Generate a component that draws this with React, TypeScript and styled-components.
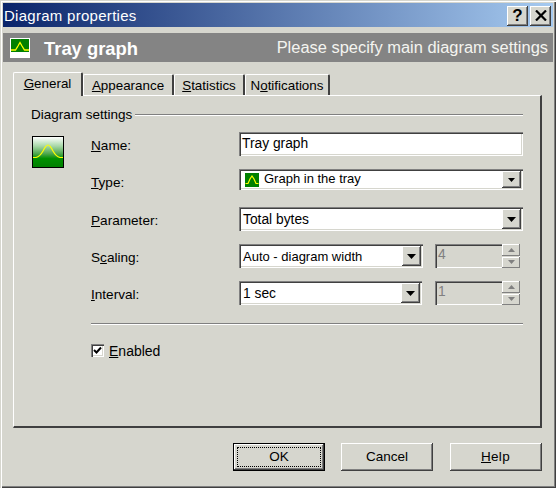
import React from "react";
import styled, { createGlobalStyle } from "styled-components";

const FACE = "#d6d6ce";
const raised = `inset -1px -1px #404040, inset 1px 1px #fff, inset -2px -2px #808080`;
const sunken = `inset 1px 1px #808080, inset 2px 2px #404040, inset -1px -1px #fff, inset -2px -2px ${FACE}`;

const Global = createGlobalStyle`
  html, body { margin: 0; padding: 0; background: ${FACE}; }
  * { box-sizing: border-box; }
`;

const Win = styled.div`
  width: 556px; height: 488px; background: ${FACE}; padding: 3px 3px 0;
  display: flex; flex-direction: column; overflow: hidden;
  font-family: "Liberation Sans", Arial, sans-serif; font-size: 13px; color: #000;
  box-shadow: inset 1px 1px ${FACE}, inset 2px 2px #fff, inset -1px -1px #404040, inset -2px -2px #808080;
`;
const TitleBar = styled.div`
  height: 24px; flex: none; display: flex; align-items: center; justify-content: space-between;
  padding: 0 2px 0 1px; background: linear-gradient(90deg, #0a246a, #a6caf0);
`;
const TitleText = styled.span`
  color: #fff; font-size: 15px; letter-spacing: 0.28px;
`;
const TitleButtons = styled.div`
  display: flex; gap: 2px; margin-top: 1px;
`;
const CapButton = styled.div`
  width: 21px; height: 20px; background: ${FACE}; box-shadow: ${raised};
  display: flex; align-items: center; justify-content: center;
  font-weight: bold; font-size: 17px; line-height: 1;
`;
const Banner = styled.div`
  margin-top: 6px; height: 29px; flex: none; background: #848484; color: #fff;
  display: flex; align-items: center; justify-content: space-between; padding: 0 5px 0 7px;
`;
const BannerLeft = styled.div`
  display: flex; align-items: center; gap: 14px;
`;
const BannerTitle = styled.span`
  font-size: 18.4px; font-weight: bold; padding-top: 3px;
`;
const BannerHint = styled.span`
  font-size: 16.45px; color: #f4f4f0;
`;
const TabStrip = styled.div`
  display: flex; align-items: flex-end; margin: 10px 0 0 10px; height: 23px; position: relative; z-index: 1; flex: none;
`;
const Tab = styled.div<{ $w: number; $active?: boolean }>`
  width: ${p => p.$w}px;
  height: ${p => (p.$active ? 24 : 21)}px;
  background: ${FACE};
  border-top: 1px solid #fff; border-left: 1px solid #fff; border-right: 2px solid #404040;
  border-top-left-radius: 2px; border-top-right-radius: 2px;
  display: flex; align-items: center; justify-content: center;
  white-space: nowrap; font-size: 13.4px;
  padding-bottom: ${p => (p.$active ? 3 : 0)}px;
  margin-bottom: ${p => (p.$active ? -1 : 0)}px;
  position: relative; z-index: ${p => (p.$active ? 2 : 1)};
`;
const Panel = styled.div`
  margin-left: 10px; width: 529px; height: 333px; flex: none;
  border-top: 1px solid #fff; border-left: 1px solid #fff; border-right: 2px solid #404040; border-bottom: 2px solid #404040;
  padding: 10px 0 0 17px; position: relative;
`;
const Legend = styled.div`
  display: flex; align-items: center; gap: 3px; width: 492px; height: 16px; font-size: 13.5px;
`;
const LegendRule = styled.div`
  flex: 1; height: 2px; background: #808080; border-bottom: 1px solid #fff; margin-top: 1px;
`;
const Body = styled.div`
  display: flex; margin-top: 10px;
`;
const BigIcon = styled.div`
  width: 32px; height: 32px; flex: none; margin: 4px 27px 0 1px; border: 1px solid #000;
  background: linear-gradient(#fff 0%, #a8d8a8 30%, #50a850 55%, #009000 72%, #008000 100%);
`;
const Form = styled.div`
  display: flex; flex-direction: column; width: 432px;
`;
const Row = styled.div<{ $top: number; $h: number }>`
  display: flex; align-items: center; height: ${p => p.$h}px; margin-top: ${p => p.$top}px;
`;
const Label = styled.div<{ $drop?: number }>`
  width: 148px; flex: none; font-size: 13.6px; padding-top: ${p => p.$drop ?? 3}px;
`;
const Field = styled.div<{ $w: number; $disabled?: boolean; $size?: number; $pad?: number }>`
  position: relative; width: ${p => p.$w}px; height: 100%;
  background: ${p => (p.$disabled ? FACE : "#fff")}; box-shadow: ${sunken};
  color: ${p => (p.$disabled ? "#808080" : "#000")};
  font-size: ${p => p.$size ?? 13.8}px; display: flex; align-items: center; gap: 5px;
  padding: 0 20px 0 ${p => p.$pad ?? 4}px;
  white-space: nowrap;
`;
const RaisedText = styled.span`
  padding-bottom: 2px;
`;
const DropButton = styled.div`
  position: absolute; right: 2px; top: 2px; bottom: 2px; width: 19px; background: ${FACE}; box-shadow: ${raised};
  display: flex; align-items: center; justify-content: center;
`;
const Spin = styled(Field)`
  margin-left: auto; margin-right: 3px; padding-bottom: 3px;
`;
const SpinCol = styled.div`
  position: absolute; left: 67px; top: 0; bottom: 0; width: 18px; display: flex; flex-direction: column; gap: 1px;
`;
const SpinBtn = styled.div`
  flex: 1; background: ${FACE}; box-shadow: inset -1px -1px #808080, inset 1px 1px #fff;
  display: flex; align-items: center; justify-content: center;
`;
const Rule = styled.div`
  height: 2px; width: 432px; background: #808080; border-bottom: 1px solid #fff; margin-top: 18px;
`;
const CheckRow = styled.div`
  display: flex; align-items: center; gap: 5px; margin-top: 17px; font-size: 14px;
`;
const CheckText = styled.span`
  padding-top: 1px;
`;
const CheckBox = styled.div`
  width: 13px; height: 13px; background: #fff; box-shadow: ${sunken}; display: flex; align-items: center; justify-content: center;
`;
const Footer = styled.div`
  display: flex; justify-content: flex-end; gap: 16px; margin: 15px 11px 0 0; flex: none;
`;
const Btn = styled.div<{ $def?: boolean; $extra?: number }>`
  width: 92px; height: 28px; background: ${FACE}; position: relative;
  margin-left: ${p => p.$extra ?? 0}px;
  display: flex; align-items: center; justify-content: center; font-size: 13.5px; padding-bottom: 1px;
  box-shadow: ${p => (p.$def ? `inset 0 0 0 1px #000, inset -2px -2px #404040, inset 2px 2px #fff, inset -3px -3px #808080` : raised)};
`;
const HelpText = styled.span`
  margin-left: -1px; letter-spacing: 0.3px;
`;
const Focus = styled.div`
  position: absolute; inset: 4px; border: 1px dotted #000;
`;
const IconSvg = styled.svg`
  display: block; flex: none;
`;

const Mini = () => (
  <IconSvg width="14" height="14" viewBox="0 0 14 14">
    <rect width="14" height="14" fill="#008000" />
    <path d="M0.5 10.5H3L5 6 7 3 9 6l2 4.5h2.5" fill="none" stroke="#ffff00" strokeWidth="1.2" />
  </IconSvg>
);
const BannerGlyph = () => (
  <IconSvg width="20" height="20" viewBox="0 0 20 20">
    <rect width="20" height="20" fill="#fff" />
    <rect x="1" y="1" width="18" height="13" fill="#008000" />
    <path d="M1 12H5.5L8 8 10 4.5 12 8l2.5 4H19" fill="none" stroke="#ffff00" strokeWidth="1.3" />
  </IconSvg>
);
const Arrow = ({ size = 4, color = "#000" }: { size?: number; color?: string }) => (
  <IconSvg width={size * 2 - 1} height={size} viewBox={`0 0 ${size * 2 - 1} ${size}`}>
    <path d={`M0 0H${size * 2 - 1}L${size - 0.5} ${size}Z`} fill={color} />
  </IconSvg>
);
const ArrowUp = () => (
  <IconSvg width="7" height="4" viewBox="0 0 7 4">
    <path d="M0 4H7L3.5 0Z" fill="#808080" />
  </IconSvg>
);
const SpinField = ({ v }: { v: string }) => (
  <Spin $w={85} $disabled $pad={3}>
    {v}
    <SpinCol>
      <SpinBtn><ArrowUp /></SpinBtn>
      <SpinBtn><Arrow color="#808080" /></SpinBtn>
    </SpinCol>
  </Spin>
);

export default function App() {
  return (
    <Win>
      <Global />
      <TitleBar>
        <TitleText>Diagram properties</TitleText>
        <TitleButtons>
          <CapButton>?</CapButton>
          <CapButton>
            <svg width="12" height="11" viewBox="0 0 12 11"><path d="M1 0.5 11 10.5M11 0.5 1 10.5" stroke="#000" strokeWidth="2.2" /></svg>
          </CapButton>
        </TitleButtons>
      </TitleBar>
      <Banner>
        <BannerLeft>
          <BannerGlyph />
          <BannerTitle>Tray graph</BannerTitle>
        </BannerLeft>
        <BannerHint>Please specify main diagram settings</BannerHint>
      </Banner>
      <TabStrip>
        <Tab $w={70} $active><span><u>G</u>eneral</span></Tab>
        <Tab $w={91}><span><u>A</u>ppearance</span></Tab>
        <Tab $w={71}><span><u>S</u>tatistics</span></Tab>
        <Tab $w={85}><span>N<u>o</u>tifications</span></Tab>
      </TabStrip>
      <Panel>
        <Legend>Diagram settings<LegendRule /></Legend>
        <Body>
          <BigIcon>
            <IconSvg width="30" height="30" viewBox="0 0 30 30">
              <path d="M0 20.5H3Q7 19.5 10 14 13 8 15 8 17 8 20 14 23 19.5 27 20.5H30" fill="none" stroke="#ffff00" strokeWidth="1.2" />
            </IconSvg>
          </BigIcon>
          <Form>
            <Row $top={0} $h={24}><Label><u>N</u>ame:</Label><Field $w={284} $pad={3}><RaisedText>Tray graph</RaisedText></Field></Row>
            <Row $top={13} $h={21}>
              <Label $drop={5}><u>T</u>ype:</Label>
              <Field $w={284} $size={13} $pad={6}><Mini /><RaisedText>Graph in the tray</RaisedText><DropButton><Arrow /></DropButton></Field>
            </Row>
            <Row $top={17} $h={24}>
              <Label><u>P</u>arameter:</Label>
              <Field $w={284}>Total bytes<DropButton><Arrow size={5} /></DropButton></Field>
            </Row>
            <Row $top={13} $h={24}>
              <Label>S<u>c</u>aling:</Label>
              <Field $w={184} $size={13}>Auto - diagram width<DropButton><Arrow size={5} /></DropButton></Field>
              <SpinField v="4" />
            </Row>
            <Row $top={13} $h={24}>
              <Label><u>I</u>nterval:</Label>
              <Field $w={183}>1 sec<DropButton><Arrow size={5} /></DropButton></Field>
              <SpinField v="1" />
            </Row>
            <Rule />
            <CheckRow>
              <CheckBox>
                <IconSvg width="9" height="9" viewBox="0 0 9 9"><path d="M1 4 3.5 6.5 8 1.5" fill="none" stroke="#000" strokeWidth="2" /></IconSvg>
              </CheckBox>
              <CheckText><u>E</u>nabled</CheckText>
            </CheckRow>
          </Form>
        </Body>
      </Panel>
      <Footer>
        <Btn $def>OK<Focus /></Btn>
        <Btn>Cancel</Btn>
        <Btn $extra={1}><HelpText><u>H</u>elp</HelpText></Btn>
      </Footer>
    </Win>
  );
}
